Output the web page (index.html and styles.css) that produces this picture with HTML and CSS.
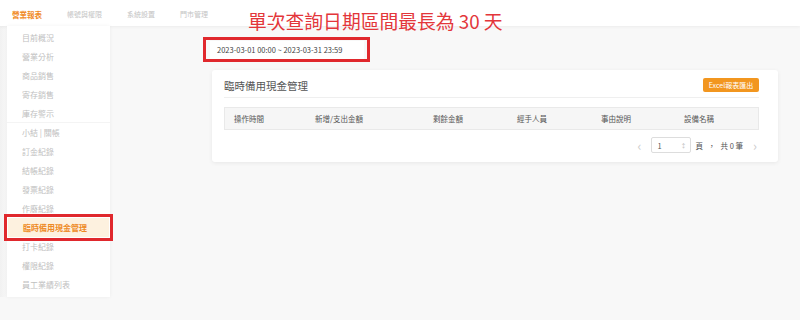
FILE: index.html
```html
<!DOCTYPE html>
<html lang="zh-Hant">
  <head>
    <meta charset="UTF-8" />
    <title>臨時備用現金管理</title>
    <link rel="stylesheet" href="styles.css">
  </head>
  <body>
    <header class="topbar">
      <nav class="topnav">
        <a class="nav-item active">營業報表</a>
        <a class="nav-item">帳號與權限</a>
        <a class="nav-item">系統設置</a>
        <a class="nav-item">門市管理</a>
      </nav>
      <h1 class="notice">單次查詢日期區間最長為 30 天</h1>
    </header>

    <div class="layout">
      <aside class="sidebar">
        <ul class="menu">
          <li>目前概況</li>
          <li>營業分析</li>
          <li>商品銷售</li>
          <li>寄存銷售</li>
          <li class="group-end">庫存警示</li>
          <li>小結 | 關帳</li>
          <li>訂金紀錄</li>
          <li>結帳紀錄</li>
          <li>發票紀錄</li>
          <li>作廢紀錄</li>
          <li class="current">臨時備用現金管理</li>
          <li>打卡紀錄</li>
          <li>權限紀錄</li>
          <li>員工業績列表</li>
        </ul>
      </aside>

      <main class="content">
        <div class="range-mark">
          <div class="range-input">2023-03-01 00:00 ~ 2023-03-31 23:59</div>
        </div>

        <section class="card">
          <div class="card-head">
            <h2>臨時備用現金管理</h2>
            <button class="btn-export">Excel報表匯出</button>
          </div>
          <div class="table-head">
            <span>操作時間</span>
            <span>新增/支出金額</span>
            <span>剩餘金額</span>
            <span>經手人員</span>
            <span>事由說明</span>
            <span>設備名稱</span>
          </div>
          <div class="pager">
            <span class="arrow">&lsaquo;</span>
            <div class="page-input">
              <span>1</span>
              <span class="spin">&#8597;</span>
            </div>
            <span>頁</span>
            <span>，</span>
            <span>共 0 筆</span>
            <span class="arrow">&rsaquo;</span>
          </div>
        </section>
      </main>
    </div>
  </body>
</html>
```

FILE: styles.css
```css
* {
  margin: 0;
  padding: 0;
  box-sizing: border-box;
}

body {
  font-family: "Noto Sans CJK TC", "Noto Sans", sans-serif;
  background: #f8f8f8;
  color: #333;
  width: 800px;
  height: 320px;
  overflow: hidden;
}

/* Top bar */
.topbar {
  height: 26px;
  background: #fff;
  box-shadow: 0 1px 3px rgba(0, 0, 0, 0.05);
  display: flex;
  align-items: center;
  position: relative;
}

.topnav {
  display: flex;
  gap: 25px;
  padding-left: 12px;
  padding-top: 2px;
}

.nav-item {
  font-size: 7px;
  color: #c4c4c4;
}

.nav-item.active {
  font-size: 7.5px;
  color: #f08a24;
  font-weight: 700;
}

.notice {
  position: absolute;
  left: 248px;
  top: 7px;
  font-size: 18.8px;
  font-weight: 400;
  color: #e3363a;
  white-space: nowrap;
}

/* Layout */
.layout {
  display: flex;
  align-items: flex-start;
  background: linear-gradient(to right, #f1f1f1, #f8f8f8 7px);
}

.sidebar {
  width: 103px;
  margin-left: 7px;
  background: #fff;
  box-shadow: 0 0 4px rgba(0, 0, 0, 0.05);
  padding: 2px 0 3px;
  position: relative;
  z-index: 2;
}

.menu {
  list-style: none;
}

.menu li {
  height: 19px;
  line-height: 19px;
  font-size: 8px;
  color: #c0c0c0;
  padding-left: 15px;
  white-space: nowrap;
}

.menu li.group-end {
  border-bottom: 1px solid #f4f4f4;
}

.menu li.current {
  background: #fdf1df;
  color: #ee8a25;
  font-weight: 700;
  outline: 3px solid #e0282d;
  outline-offset: 1px;
  margin: 0 1px;
}

/* Content */
.content {
  flex: 1;
  padding: 11px 22px 0 93px;
}

.range-mark {
  width: 167px;
  height: 25px;
  border: 3px solid #e0282d;
  padding: 0 3px 0 4px;
  display: flex;
  align-items: center;
}

.range-input {
  background: #fff;
  width: 100%;
  height: 18px;
  font-size: 7.5px;
  line-height: 18px;
  color: #444;
  padding-left: 7px;
  white-space: nowrap;
}

.card {
  background: #fff;
  margin: 8px 0 0 9px;
  width: 566px;
  height: 92px;
  box-shadow: 0 1px 4px rgba(0, 0, 0, 0.07);
  border-radius: 3px;
  padding: 0 19px 0 12px;
}

.card-head {
  display: flex;
  justify-content: space-between;
  align-items: center;
  height: 28px;
  border-bottom: 1px solid #efefef;
  padding-top: 2px;
}

.card-head h2 {
  font-size: 10.5px;
  font-weight: 400;
  color: #555;
  padding-top: 2px;
}

.btn-export {
  background: #f2961f;
  color: #fff;
  border: none;
  border-radius: 2px;
  font-family: inherit;
  font-size: 7px;
  width: 56px;
  height: 14px;
}

.table-head {
  margin-top: 9px;
  height: 23px;
  background: #f6f6f6;
  border: 1px solid #e9e9e9;
  display: grid;
  grid-template-columns: 81px 118px 84px 84px 83px 1fr;
  align-items: center;
  padding-left: 9px;
  font-size: 7.5px;
  color: #555;
}

.pager {
  display: flex;
  justify-content: flex-end;
  align-items: center;
  gap: 5px;
  margin-top: 7px;
  font-size: 7.5px;
  color: #555;
}

.pager .arrow {
  color: #ccc;
  font-size: 13px;
  line-height: 1;
  padding: 0 2px;
}

.pager .arrow:first-child {
  margin-right: 2px;
}

.pager .arrow:last-child {
  margin-left: 3px;
}

.page-input {
  width: 40px;
  height: 16px;
  border: 1px solid #ddd;
  border-radius: 2px;
  display: flex;
  justify-content: space-between;
  align-items: center;
  padding: 0 3px 0 6px;
}

.page-input .spin {
  color: #bbb;
  font-size: 6px;
}
```
